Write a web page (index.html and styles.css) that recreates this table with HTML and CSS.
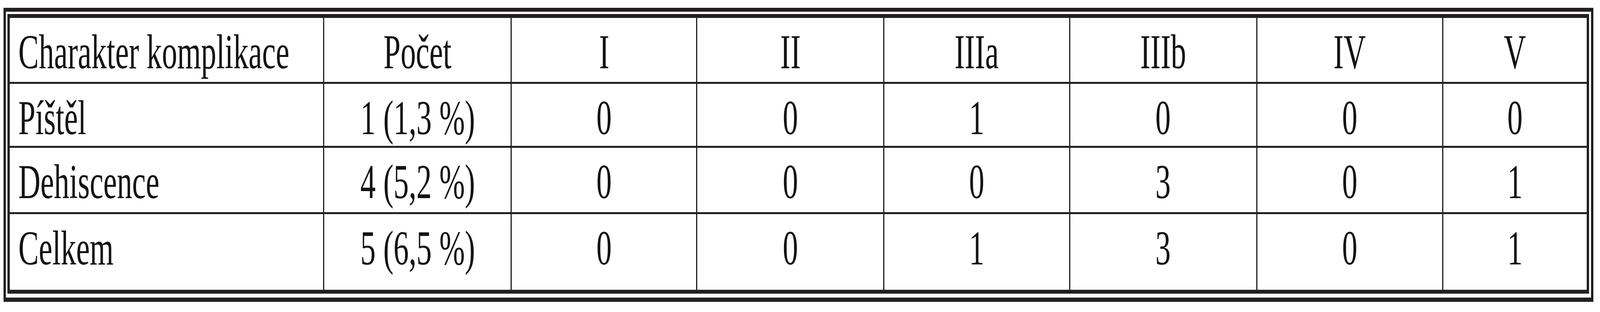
FILE: index.html
```html
<!DOCTYPE html>
<html lang="cs">
<head>
<meta charset="utf-8">
<title>Charakter komplikace</title>
<link rel="stylesheet" href="styles.css">
</head>
<body>
<div class="frame">
  <table class="grid">
    <thead>
      <tr class="r-head">
        <th class="c1 left"><div class="cell"><span class="t">Charakter komplikace</span></div></th>
        <th class="c2"><div class="cell"><span class="t">Počet</span></div></th>
        <th class="c3"><div class="cell"><span class="t">I</span></div></th>
        <th class="c4"><div class="cell"><span class="t">II</span></div></th>
        <th class="c5"><div class="cell"><span class="t">IIIa</span></div></th>
        <th class="c6"><div class="cell"><span class="t">IIIb</span></div></th>
        <th class="c7"><div class="cell"><span class="t">IV</span></div></th>
        <th class="c8"><div class="cell"><span class="t">V</span></div></th>
      </tr>
    </thead>
    <tbody>
      <tr class="r1">
        <td class="left"><div class="cell"><span class="t">Píštěl</span></div></td>
        <td><div class="cell"><span class="t">1 (1,3 %)</span></div></td>
        <td><div class="cell"><span class="t">0</span></div></td>
        <td><div class="cell"><span class="t">0</span></div></td>
        <td><div class="cell"><span class="t">1</span></div></td>
        <td><div class="cell"><span class="t">0</span></div></td>
        <td><div class="cell"><span class="t">0</span></div></td>
        <td><div class="cell"><span class="t">0</span></div></td>
      </tr>
      <tr class="r2">
        <td class="left"><div class="cell"><span class="t">Dehiscence</span></div></td>
        <td><div class="cell"><span class="t">4 (5,2 %)</span></div></td>
        <td><div class="cell"><span class="t">0</span></div></td>
        <td><div class="cell"><span class="t">0</span></div></td>
        <td><div class="cell"><span class="t">0</span></div></td>
        <td><div class="cell"><span class="t">3</span></div></td>
        <td><div class="cell"><span class="t">0</span></div></td>
        <td><div class="cell"><span class="t">1</span></div></td>
      </tr>
      <tr class="r3">
        <td class="left"><div class="cell"><span class="t">Celkem</span></div></td>
        <td><div class="cell"><span class="t">5 (6,5 %)</span></div></td>
        <td><div class="cell"><span class="t">0</span></div></td>
        <td><div class="cell"><span class="t">0</span></div></td>
        <td><div class="cell"><span class="t">1</span></div></td>
        <td><div class="cell"><span class="t">3</span></div></td>
        <td><div class="cell"><span class="t">0</span></div></td>
        <td><div class="cell"><span class="t">1</span></div></td>
      </tr>
    </tbody>
  </table>
</div>
</body>
</html>
```
FILE: styles.css
```css
/* Horizontal design unit: the reference is 6538px wide; lay it out
   proportionally to the actual viewport width. Vertical values stay in px. */
:root {
  --u: calc(100vw / 6538);
  --k: 1;
}

@media (max-width: 6000px) {
  :root { --k: 0.62649; }
}

html, body {
  margin: 0;
  padding: 0;
  background: #ffffff;
  overflow: hidden;
}

body {
  padding: 20px 0 0 calc(15 * var(--u));
  font-family: "Liberation Serif", "Times New Roman", serif;
  color: #141214;
}

.frame {
  display: inline-block;
  border-style: solid;
  border-color: #231f20;
  border-width: 10px calc(10 * var(--u)) 11px calc(10 * var(--u));
  padding: 6px calc(9 * var(--u)) 10px calc(5 * var(--u));
  background: #ffffff;
}

.grid {
  border-style: solid;
  border-color: #231f20;
  border-width: 10px calc(11 * var(--u)) 10px calc(10 * var(--u));
  border-collapse: separate;
  border-spacing: 0;
  table-layout: fixed;
  width: calc(6463 * var(--u));
}

.grid th,
.grid td {
  box-sizing: border-box;
  font-size: 125px;
  font-weight: normal;
  line-height: normal;
  vertical-align: top;
  padding: 16px 0 0 0;
  border-right: calc(5 * var(--u)) solid #231f20;
  border-bottom: 5px solid #231f20;
}

.grid th:last-child,
.grid td:last-child {
  border-right: none;
}

.grid tr.r3 td {
  border-bottom: none;
}

.cell {
  display: flex;
  justify-content: center;
}

.t {
  flex: none;
  white-space: nowrap;
  transform: scaleX(var(--k));
  transform-origin: 50% 50%;
}

.grid .left {
  padding-left: calc(36 * var(--u));
}

.grid .left .cell {
  justify-content: flex-start;
}

.grid .left .t {
  transform-origin: 0 50%;
}

.c1 { width: calc(1286 * var(--u)); }
.c2 { width: calc(766 * var(--u)); }
.c3 { width: calc(758 * var(--u)); }
.c4 { width: calc(764 * var(--u)); }
.c5 { width: calc(759 * var(--u)); }
.c6 { width: calc(764 * var(--u)); }
.c7 { width: calc(760 * var(--u)); }
.c8 { width: calc(585 * var(--u)); }

.r-head th { height: 169px; }
.r1 td { height: 164px; }
.r2 td { height: 170px; }
.r3 td { height: 194px; }
```
